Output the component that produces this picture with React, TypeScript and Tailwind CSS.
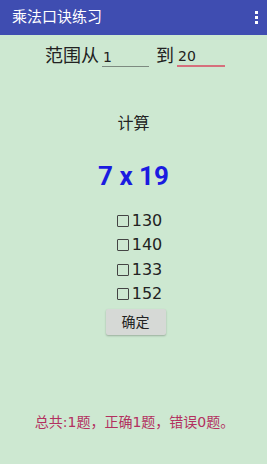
export default function App() {
  const options = ['130', '140', '133', '152']
  return (
    <div
      className="w-[267px] h-[464px] bg-[#cde8d1] flex flex-col overflow-hidden"
      style={{ fontFamily: '"DejaVu Sans", "Noto Sans CJK SC", sans-serif' }}
    >
      {/* Toolbar */}
      <div className="h-[35px] bg-[#3f4db1] flex items-center justify-between pl-3 pr-[9px] shrink-0">
        <span className="text-white text-[15px]">乘法口诀练习</span>
        <div className="flex flex-col gap-[2px]">
          <div className="w-[3px] h-[3px] bg-white" />
          <div className="w-[3px] h-[3px] bg-white" />
          <div className="w-[3px] h-[3px] bg-white" />
        </div>
      </div>

      {/* Range row */}
      <div className="flex items-end pl-[45px] pt-[3px] h-[32px] text-[#222]">
        <span className="text-[18px] leading-[22px]">范围从</span>
        <div className="w-[47px] ml-[3px] border-b border-[#7d8a80] text-[14px] leading-[18px] pl-[1px]">1</div>
        <span className="text-[18px] leading-[22px] ml-[7px]">到</span>
        <div className="w-[48px] ml-[3px] border-b-2 border-[#d66f7c] text-[14px] leading-[18px] pl-[1px]">20</div>
      </div>

      <div className="text-center text-[16px] text-[#222] mt-[46px] leading-[22px]">计算</div>

      <div
        className="text-center text-[26px] font-bold text-[#1b1be0] mt-[26px] leading-[30px]"
        style={{ fontFamily: 'Roboto, sans-serif' }}
      >
        7 x 19
      </div>

      <div className="flex flex-col items-center mt-[19px] gap-[3px]">
        {options.map((o) => (
          <label key={o} className="flex items-center gap-[3px] h-[21.5px] pl-[12px]">
            <span className="w-[12px] h-[12px] border border-[#444] rounded-[1px]" />
            <span className="text-[16px] text-[#222] leading-[20px]">{o}</span>
          </label>
        ))}
      </div>

      <div className="flex justify-center mt-[4px] pl-[4px]">
        <button className="w-[60px] h-[26px] bg-[#d6d9d6] shadow-[0_1px_2px_rgba(0,0,0,0.25)] rounded-[2px] text-[14px] text-[#222]">
          确定
        </button>
      </div>

      <div className="text-center text-[14px] text-[#b3305f] mt-[77px] pl-[2px]">
        总共:1题，正确1题，错误0题。
      </div>
    </div>
  )
}
